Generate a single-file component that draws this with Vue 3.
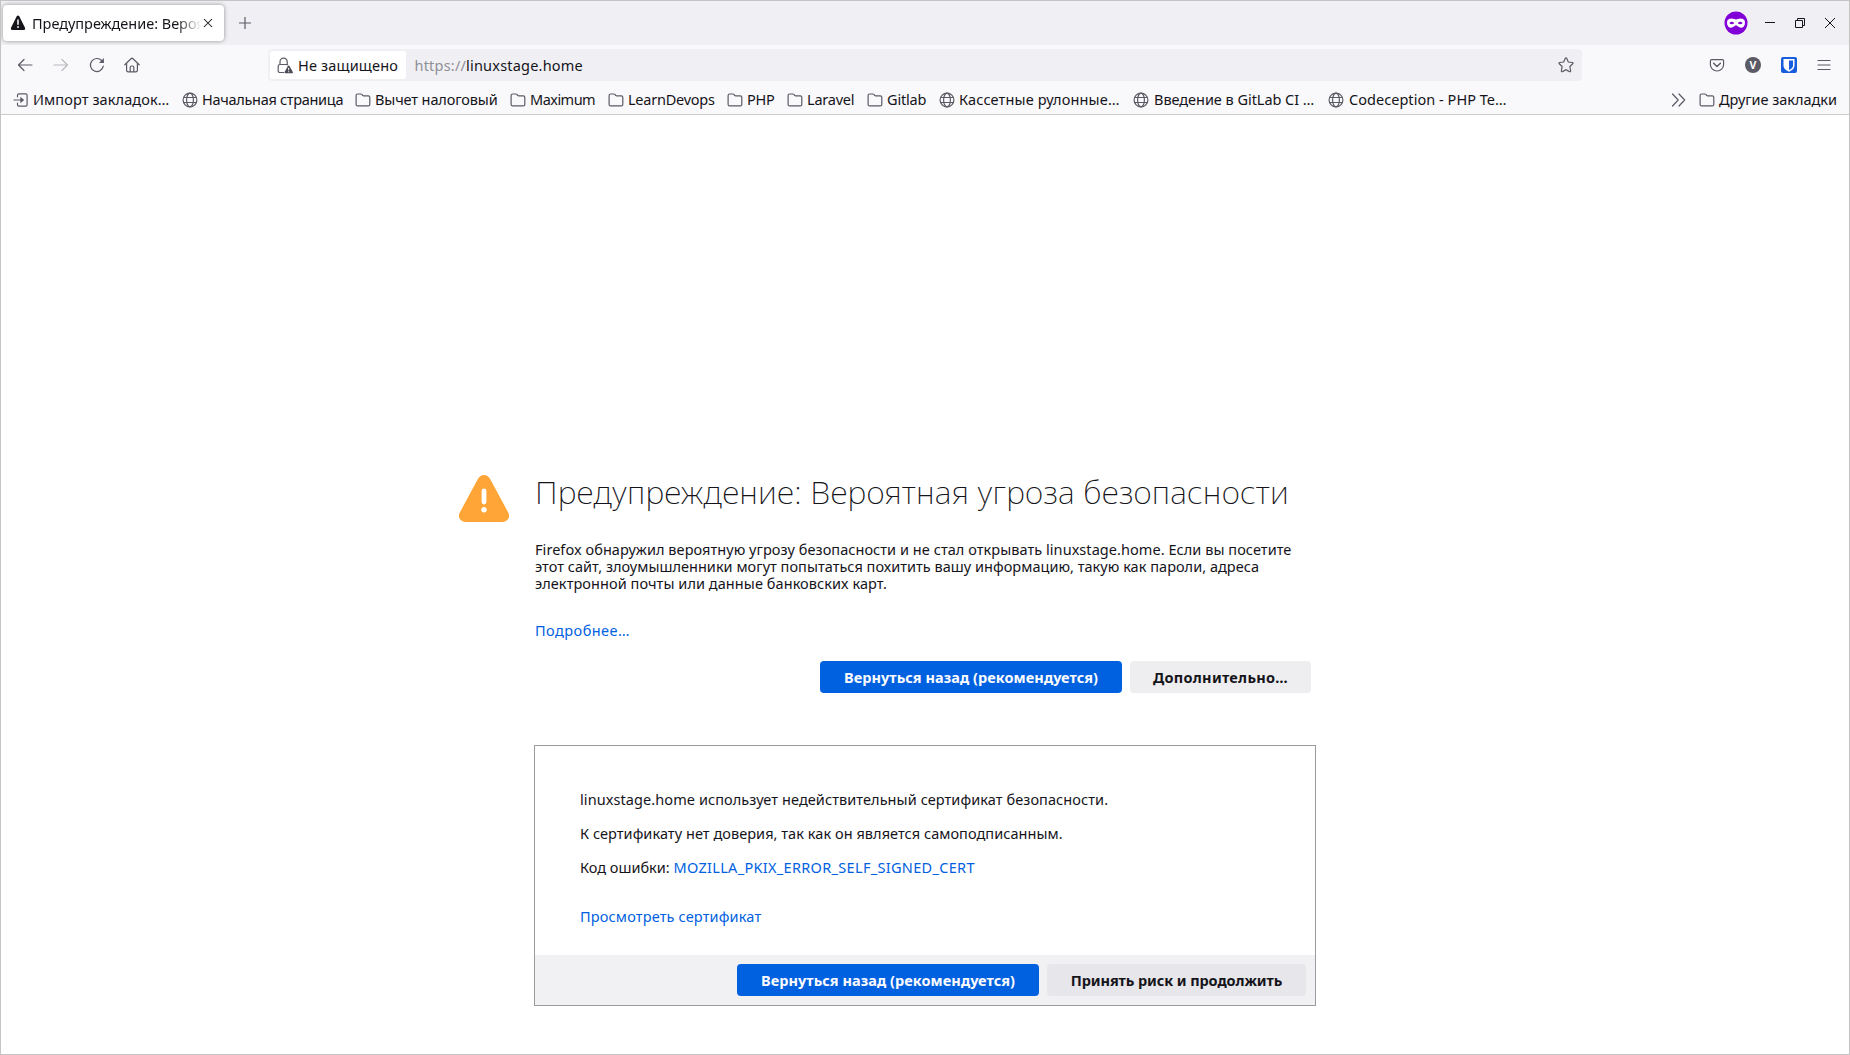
<script setup>
const bookmarks = [
  { title: 'Импорт закладок…', icon: 'import', width: 169, spacing: 0.103 },
  { title: 'Начальная страница', icon: 'globe', width: 173, spacing: -0.3 },
  { title: 'Вычет налоговый', icon: 'folder', width: 155, spacing: -0.12 },
  { title: 'Maximum', icon: 'folder', width: 98, spacing: -0.52 },
  { title: 'LearnDevops', icon: 'folder', width: 119, spacing: -0.24 },
  { title: 'PHP', icon: 'folder', width: 60, spacing: -0.2 },
  { title: 'Laravel', icon: 'folder', width: 80, spacing: -0.22 },
  { title: 'Gitlab', icon: 'folder', width: 72, spacing: -0.18 },
  { title: 'Кассетные рулонные…', icon: 'globe', width: 194, spacing: 0.15 },
  { title: 'Введение в GitLab CI …', icon: 'globe', width: 195, spacing: -0.04, wide: true },
  { title: 'Codeception - PHP Te…', icon: 'globe', width: 190, spacing: 0.04, wide: true },
]
</script>

<template>
  <div class="window">
    <header class="tabbar">
      <div class="tab">
        <svg class="tab-warning" width="16" height="16" viewBox="0 0 16 16">
          <path d="M6.6 1.6Q8-.6 9.4 1.6l5.5 10.9Q15.8 15 13.500 15h-11Q.2 15 1.100 12.500z" fill="#15141a" />
          <path d="M8 5v4.300" stroke="#fff" stroke-width="1.500" stroke-linecap="round" />
          <circle cx="8" cy="12" r=".9" fill="#fff" />
        </svg>
        <span class="tab-title">Предупреждение: Вероятная</span>
        <svg class="tab-close" width="10" height="10" viewBox="0 0 10 10">
          <path d="M1 1l8 8M9 1L1 9" stroke="#15141a" stroke-width="1.050" />
        </svg>
      </div>
      <svg class="new-tab" width="14" height="14" viewBox="0 0 14 14">
        <path d="M7 1v12M1 7h12" stroke="#5b5b66" stroke-width="1.200" />
      </svg>
      <div class="window-controls">
        <svg width="24" height="24" viewBox="0 0 24 24">
          <circle cx="12" cy="12" r="11.500" fill="#8000d7" />
          <path
            fill="#fff"
            fill-rule="evenodd"
            d="M3 11.500C3 8.500 5 7.500 7.500 7.500c2.200 0 3.300.9 4.500.9s2.300-.9 4.500-.9c2.500 0 4.500 1 4.500 4 0 3.500-1.700 5.300-4 5.300-2.600 0-3.500-2.500-5-2.500s-2.400 2.500-5 2.500c-2.300 0-4-1.800-4-5.300zM5.300 12Q7.800 14.600 10.300 12 7.800 9.500 5.300 12zM13.700 12q2.500 2.600 5 0-2.500-2.500-5 0z"
          />
        </svg>
        <svg width="12" height="12" viewBox="0 0 12 12"><path d="M1 5.500h10" stroke="#15141a" /></svg>
        <svg width="12" height="12" viewBox="0 0 12 12" fill="none" stroke="#15141a">
          <path d="M1.500 3.500h7v7h-7zM3.500 3.500v-2h7v7h-2" />
        </svg>
        <svg width="12" height="12" viewBox="0 0 12 12"><path d="M1 1l10 10M11 1L1 11" stroke="#15141a" /></svg>
      </div>
    </header>

    <nav class="toolbar">
      <div class="nav-buttons">
        <svg width="16" height="16" viewBox="0 0 16 16" class="line">
          <path d="M15 8H1.500M7 2.500L1.500 8 7 13.500" />
        </svg>
        <svg width="16" height="16" viewBox="0 0 16 16" class="line dim">
          <path d="M1 8h13.500M9 2.500L14.500 8 9 13.500" />
        </svg>
        <svg width="16" height="16" viewBox="0 0 16 16" class="line">
          <path d="M14.300 9.200A6.500 6.500 0 1 1 12.600 3.500L14 5" />
          <path d="M14.900 1v5H10z" fill="#5b5b66" stroke="none" />
        </svg>
        <svg width="16" height="16" viewBox="0 0 16 16" class="line">
          <path d="M.8 7.800L7 1.700q1-.9 2 0l6.200 6.100M2.600 6.500v6.700q0 1.700 1.700 1.700h7.400q1.700 0 1.700-1.700V6.500M6.200 14.800V10.300q0-1.300 1.300-1.300h1q1.300 0 1.300 1.300v4.500" />
        </svg>
      </div>

      <div class="urlbar">
        <div class="identity">
          <svg width="17" height="17" viewBox="0 0 17 17">
            <path
              d="M7 15.500H3Q1.200 15.500 1.200 13.700V9.200Q1.200 7.500 3 7.500H9.200Q10.500 7.500 11 8.300M3 7.300V4.700a3.600 3.600 0 0 1 7.200 0v2.600"
              fill="none" stroke="#5b5b66" stroke-width="1.200"
            />
            <path d="M10.800 9.200q.9-1.600 1.800 0l3.200 5.800q.5 1.300-.8 1.300H8.400q-1.300 0-.8-1.300z" fill="#4a4a55" />
            <path d="M11.700 10.800v2.500M11.700 14.200v1" stroke="#fff" />
          </svg>
          <span class="identity-label">Не защищено</span>
        </div>
        <span class="url"><span class="scheme">https://</span>linuxstage.home</span>
        <svg class="star" width="16" height="16" viewBox="0 0 16 16">
          <path
            d="M8 .9Q8.500.9 8.800 1.600L10.300 5l3.900.5q1.400.3.5 1.300L11.900 9.500l.7 4.200q.1 1.400-1.200.9L8 12.800l-3.400 1.800q-1.300.5-1.200-.9l.7-4.200L1.300 6.800Q.4 5.800 1.800 5.500L5.700 5l1.500-3.400Q7.500.9 8 .9z"
            fill="none" stroke="#5b5b66" stroke-width="1.200"
          />
        </svg>
      </div>

      <div class="actions">
        <svg width="16" height="16" viewBox="0 0 16 16" class="line">
          <path d="M2.700 2.600h10.600q1.300 0 1.300 1.300V7.400a6.600 6.600 0 0 1-13.200 0V3.900q0-1.300 1.300-1.300z" />
          <path d="M4.600 6.300L8 9.600l3.400-3.300" stroke-width="1.400" />
        </svg>
        <span class="avatar">V</span>
        <svg width="16" height="16" viewBox="0 0 16 16">
          <rect width="16" height="16" rx="2" fill="#175ddc" />
          <path d="M2.500 2h11v6.500c0 3-2.600 4.900-5.500 6.200C5.100 13.400 2.500 11.500 2.500 8.500z" fill="#fff" />
          <path d="M8 3.500h4v5c0 2-1.800 3.500-4 4.600z" fill="#175ddc" />
        </svg>
        <svg width="14" height="14" viewBox="0 0 14 14" class="line">
          <path d="M1 2.500h12M1 7h12M1 11.500h12" />
        </svg>
      </div>
    </nav>

    <div class="bookmarks">
      <div
        v-for="item in bookmarks"
        :key="item.title"
        class="bookmark"
        :class="{ wide: item.wide }"
        :style="{ width: item.width + 'px', letterSpacing: item.spacing + 'px' }"
      >
        <svg v-if="item.icon === 'import'" width="16" height="16" viewBox="0 0 16 16" class="line">
          <path d="M4.500 4.800V3.300q0-1.400 1.400-1.400h6.800q1.400 0 1.400 1.400v9.400q0 1.400-1.400 1.400H5.900q-1.400 0-1.400-1.400v-1.500M1 8h8" />
          <path d="M7.300 4.800L11.200 8l-3.900 3.200z" fill="#5b5b66" stroke="none" />
        </svg>
        <svg v-else-if="item.icon === 'globe'" width="16" height="16" viewBox="0 0 16 16" class="line">
          <circle cx="8" cy="8" r="6.900" />
          <ellipse cx="8" cy="8" rx="3.400" ry="6.900" />
          <path d="M1.800 5.500h12.400M1.800 10.500h12.400" />
        </svg>
        <svg v-else width="16" height="16" viewBox="0 0 16 16" class="line">
          <path d="M2.600 2h3.200q.6 0 1 .4l1 1.100q.3.400.9.400h4.600q1.500 0 1.500 1.500v7q0 1.500-1.500 1.500H2.600q-1.500 0-1.500-1.500V3.500Q1.100 2 2.600 2z" />
        </svg>
        <span>{{ item.title }}</span>
      </div>
      <svg class="overflow line" width="15" height="14" viewBox="0 0 15 14">
        <path d="M1.500 1l5.700 6-5.700 6M8 1l5.700 6L8 13" />
      </svg>
      <div class="bookmark other">
        <svg width="16" height="16" viewBox="0 0 16 16" class="line">
          <path d="M2.600 2h3.200q.6 0 1 .4l1 1.100q.3.400.9.400h4.600q1.500 0 1.500 1.500v7q0 1.500-1.500 1.500H2.600q-1.500 0-1.500-1.500V3.500Q1.100 2 2.600 2z" />
        </svg>
        <span>Другие закладки</span>
      </div>
    </div>

    <main class="page">
      <div class="notice">
        <svg class="big-warning" width="50" height="47" viewBox="0 0 50 47">
          <path d="M19 3.800Q21.200 0 25 0t6 3.800L49.200 37.500Q51.500 42 48 45.300 46.300 47 43.500 47h-37Q3.700 47 2 45.300-1.500 42 .8 37.500z" fill="#ffa436" />
          <path d="M25 16v11" stroke="#fff" stroke-width="4.800" stroke-linecap="round" />
          <circle cx="25" cy="34.800" r="2.700" fill="#fff" />
        </svg>
        <section class="message">
          <h1>Предупреждение: Вероятная угроза безопасности</h1>
          <p class="intro">
            <span class="l1">Firefox обнаружил вероятную угрозу безопасности и не стал открывать linuxstage.home. Если вы посетите</span><br>
            <span class="l2">этот сайт, злоумышленники могут попытаться похитить вашу информацию, такую как пароли, адреса</span><br>
            <span class="l3">электронной почты или данные банковских карт.</span>
          </p>
          <a class="more">Подробнее…</a>
          <div class="buttons">
            <button class="primary">Вернуться назад (рекомендуется)</button>
            <button class="advanced">Дополнительно…</button>
          </div>
        </section>
      </div>

      <section class="details">
        <div class="details-body">
          <p class="l4">linuxstage.home использует недействительный сертификат безопасности.</p>
          <p class="l5">К сертификату нет доверия, так как он является самоподписанным.</p>
          <p>Код ошибки: <a class="code">MOZILLA_PKIX_ERROR_SELF_SIGNED_CERT</a></p>
          <a class="certificate">Просмотреть сертификат</a>
        </div>
        <footer class="details-footer">
          <button class="primary">Вернуться назад (рекомендуется)</button>
          <button class="accept">Принять риск и продолжить</button>
        </footer>
      </section>
    </main>
  </div>
</template>

<style>
body {
  margin: 0;
}
</style>

<style scoped>
.window {
  display: flex;
  flex-direction: column;
  box-sizing: border-box;
  width: 1850px;
  height: 1055px;
  overflow: hidden;
  border: 1px solid #c4c4c4;
  background: #fff;
  color: #15141a;
  font: 14.5px/17px "Noto Sans", "Open Sans", sans-serif;
  white-space: nowrap;
}
svg {
  flex: none;
  display: block;
}
.line {
  fill: none;
  stroke: #5b5b66;
  stroke-width: 1.2;
  stroke-linecap: round;
  stroke-linejoin: round;
}
.dim {
  opacity: 0.4;
}

.tabbar {
  display: flex;
  flex: none;
  align-items: center;
  height: 44px;
  background: #f0f0f4;
}
.tab {
  display: flex;
  align-items: center;
  box-sizing: border-box;
  width: 221px;
  height: 36px;
  margin-left: 2px;
  padding-left: 7px;
  border-radius: 4px;
  background: #fff;
  box-shadow: 0 0 4px rgba(0, 0, 0, 0.4);
}
.tab-title {
  width: 169px;
  margin-left: 6px;
  overflow: hidden;
  letter-spacing: -0.023px;
  line-height: 22px;
  mask-image: linear-gradient(to left, transparent, #000 24px);
}
.tab-close {
  margin-left: 2px;
}
.new-tab {
  margin-left: 14px;
}
.window-controls {
  display: flex;
  align-items: center;
  gap: 18px;
  margin-left: auto;
  padding-right: 13px;
}
.window-controls svg:first-child {
  margin-right: -2px;
}

.toolbar {
  display: flex;
  flex: none;
  align-items: center;
  height: 40px;
  background: #f9f9fb;
}
.nav-buttons {
  display: flex;
  gap: 19.8px;
  width: 251px;
  padding-left: 16px;
}
.urlbar {
  display: flex;
  align-items: center;
  box-sizing: border-box;
  width: 1314px;
  height: 32px;
  padding: 0 8px 0 2px;
  border-radius: 4px;
  background: #f0f0f4;
}
.identity {
  display: flex;
  align-items: center;
  box-sizing: border-box;
  width: 136px;
  height: 28px;
  padding-left: 7px;
  border-radius: 3px;
  background: #fff;
}
.identity-label {
  margin-left: 4px;
  letter-spacing: 0.17px;
}
.url {
  margin-left: 8.500px;
  letter-spacing: 0.2px;
}
.scheme {
  color: #8f8f96;
}
.star {
  margin-left: auto;
}
.actions {
  display: flex;
  align-items: center;
  gap: 20px;
  margin-left: auto;
  padding-right: 18px;
}
.avatar {
  width: 16px;
  height: 16px;
  border-radius: 50%;
  background: #5b5b66;
  color: #fff;
  font-size: 10.5px;
  font-weight: 700;
  line-height: 16px;
  text-align: center;
}

.bookmarks {
  display: flex;
  flex: none;
  align-items: center;
  box-sizing: border-box;
  height: 30px;
  padding: 0 13px 0 12px;
  border-bottom: 1px solid #ccc;
  background: #f9f9fb;
}
.bookmark {
  display: flex;
  flex: none;
  align-items: center;
  gap: 4px;
}
.wide {
  gap: 5px;
}
.overflow {
  margin-left: auto;
}
.other {
  width: 137px;
  margin-left: 13px;
  letter-spacing: -0.03px;
}

.page {
  display: flex;
  flex-direction: column;
  width: 858px;
  margin-left: 458px;
}
.notice {
  display: flex;
  margin-top: 360px;
}
.message {
  flex: 1;
  margin-left: 26px;
}
h1 {
  margin: -3px 0 29px;
  font-size: 32px;
  font-weight: 200;
  line-height: 40px;
  letter-spacing: 0.22px;
}
p {
  margin: 0;
}
a {
  color: #0061e0;
}
.l1 {
  letter-spacing: 0.056px;
}
.l2 {
  letter-spacing: 0.03px;
}
.l3 {
  letter-spacing: 0.07px;
}
.l4 {
  letter-spacing: 0.08px;
}
.l5 {
  letter-spacing: 0.055px;
}
.more {
  display: block;
  margin-top: 30px;
  letter-spacing: 0.46px;
}
.buttons {
  display: flex;
  justify-content: flex-end;
  gap: 8px;
  margin: 22px 6px 0 0;
}
button {
  height: 32px;
  padding: 0;
  border: 0;
  border-radius: 4px;
  color: #15141a;
  font: 700 14.5px/32px "Noto Sans", "Open Sans", sans-serif;
}
.primary {
  width: 302px;
  background: #0061e0;
  color: #fbfbfe;
  letter-spacing: 0.055px;
}
.advanced {
  width: 181px;
  background: #eeeef0;
  letter-spacing: 0.26px;
}
.accept {
  width: 259px;
  background: #e6e6eb;
  letter-spacing: -0.091px;
}
.details {
  box-sizing: border-box;
  width: 782px;
  margin: 52px 0 0 75px;
  border: 1px solid #9b9b9f;
}
.details-body {
  display: flex;
  flex-direction: column;
  gap: 17px;
  box-sizing: border-box;
  height: 209px;
  padding: 45px 45px 0;
}
.code {
  letter-spacing: 0.315px;
}
.certificate {
  margin-top: 15px;
  letter-spacing: 0.16px;
}
.details-footer {
  display: flex;
  justify-content: flex-end;
  gap: 8px;
  height: 32px;
  padding: 9px;
  background: #f1f1f4;
}
</style>
